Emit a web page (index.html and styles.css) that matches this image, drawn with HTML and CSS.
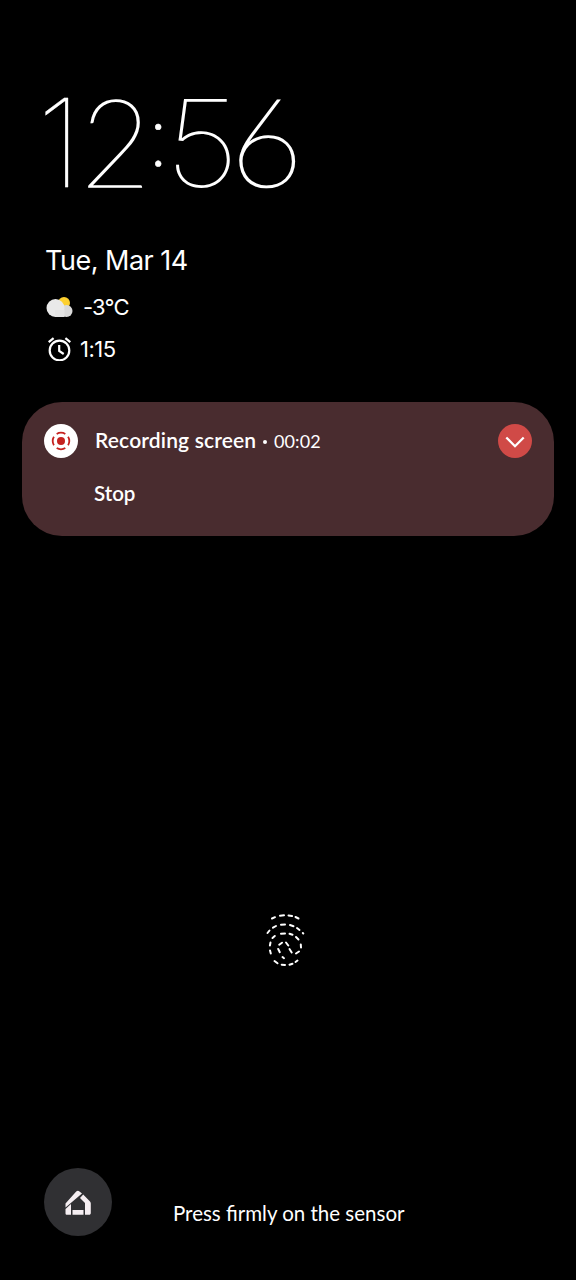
FILE: index.html
```html
<!DOCTYPE html>
<html lang="en">
<head>
<meta charset="utf-8">
<title>Lock screen</title>
<link rel="stylesheet" href="styles.css">
</head>
<body>
<main class="screen">
  <time class="clock"><span class="digit one">1</span><span class="digit two">2</span><span class="digit colon">:</span><span class="digit five">5</span><span class="digit six">6</span></time>
  <div class="date">Tue, Mar 14</div>
  <div class="status weather">
    <svg class="weather-icon" width="28" height="22" viewBox="0 0 28 22"><circle cx="18" cy="7" r="6" fill="#fdd02f"/><circle cx="20.500" cy="15" r="6" fill="#dadada"/><circle cx="9.500" cy="12" r="9" fill="#e9e9e9"/><path d="M9 14h9.500v7H9z" fill="#e4e4e4"/></svg>
    <span>-3°C</span>
  </div>
  <div class="status alarm">
    <svg class="alarm-icon" width="24" height="24" viewBox="0 0 24 24" fill="none" stroke="#fff" stroke-width="2.200"><circle cx="11.500" cy="13.500" r="9.800"/><path d="M11.200 8v6l4.500 3M.7 5.200 5.600 1.200M17.400 1.200l4.900 4"/></svg>
    <span>1:15</span>
  </div>
  <section class="card">
    <header class="card-head">
      <svg class="app-icon" width="34" height="34" viewBox="0 0 34 34"><circle cx="17" cy="17" r="17" fill="#fff"/><circle cx="17" cy="17" r="4" fill="#c5221f"/><circle cx="17" cy="17" r="8.300" fill="none" stroke="#c5221f" stroke-width="1.800" pathLength="80" stroke-dasharray="14 6" stroke-dashoffset="7"/></svg>
      <h1 class="title">Recording screen</h1><span class="dot"></span><span class="elapsed">00:02</span>
      <button class="expand" aria-label="Expand"><svg width="34" height="34" viewBox="0 0 34 34" fill="none" stroke="#fff" stroke-width="2.300"><path d="m8.300 13.500 8.700 8.700 8.700-8.700"/></svg></button>
    </header>
    <button class="stop">Stop</button>
  </section>
  <svg class="fingerprint" width="42" height="56" viewBox="264 912 42 56" fill="none" stroke="#fff" stroke-width="2" stroke-linecap="round">
    <path d="m272 918.500 3-1.300M280 915.700l4-.4M288.500 915.500l3.500.6M295.500 917l3 1.500"/>
    <path d="m267.500 933 2-2.500M273 927.700l3-1.700M281 924.700l4-.2M290 925l3.500 1.200M297 928l2.500 2M302.800 933l.5.500"/>
    <path d="m272.500 938 2.300-2M281 933.700l4-.2M289.500 933.800l3 1M296 937l2.500 2.500M300.800 944.500l.2 3M299 951.500l-3 2M291.700 952.500l-2.200-3.500M288.300 945.500l-2.300-3M282 942.700l-2.800 2M278.200 949l1.600 3.200M282.500 957l1.500 1.200M270.500 942.500l-.6 3M270 950.500l.8 3M274.500 961l3 2.300M281.700 964.700l3.300.3M289.500 964.700l3-1M295.500 962l2-1.500"/>
  </svg>
  <footer class="footer">
    <button class="home" aria-label="Home controls"><svg width="26" height="26" viewBox="0 0 26 26" fill="#f5eef2"><path d="m.5 14.500 10.700-12a2.500 2.500 0 0 1 3.300-.1l2.500 2L.5 18.500zM18.200 5.500 25 12.500c.6.600.8 1.300.8 2V24c0 1-.7 1.800-1.600 1.800H20V14l-5-5zM.5 20l5.500-5v10.800H2c-1 0-1.500-.7-1.500-1.600zM7.500 21h11v4.800h-11z"/></svg></button>
    <p class="hint">Press firmly on the sensor</p>
  </footer>
</main>
</body>
</html>
```
FILE: styles.css
```css
* { box-sizing: border-box; }
body { margin: 0; background: #000; color: #fff; font-family: Lato, "Liberation Sans", sans-serif; }
button { border: 0; padding: 0; background: none; color: inherit; font: inherit; }
.screen { display: flex; flex-direction: column; height: 1280px; padding: 70px 22px 0; }
.clock { display: flex; height: 145px; margin-left: 15px; font-size: 123px; font-weight: 100; line-height: 139px; }
.digit { display: block; white-space: nowrap; letter-spacing: -10px; transform-origin: left; -webkit-text-stroke: 1.7px #fff; }
.one { width: 44px; font-family: Inter, sans-serif; font-size: 122px; line-height: 146px; -webkit-text-stroke: 0.3px #fff; }
.two { width: 67px; transform: scaleX(0.97); }
.colon { width: 17px; font-size: 88px; line-height: 124px; letter-spacing: -5px; -webkit-text-stroke: 0.6px #fff; }
.five { width: 65px; font-family: Inter, sans-serif; font-size: 121px; line-height: 147px; letter-spacing: -14px; transform: scaleX(1.09); -webkit-text-stroke: 0; }
.six { transform: scaleX(1.02); }
.date { margin: 26px 0 0 23px; height: 40px; font-family: Inter, sans-serif; font-size: 27px; line-height: 40px; letter-spacing: -0.5px; }
.status { display: flex; align-items: center; height: 42px; margin-left: 24px; font-family: Inter, sans-serif; font-size: 22px; letter-spacing: -0.8px; }
.weather { margin-top: 5px; gap: 9px; }
.alarm { gap: 8px; padding-left: 2px; letter-spacing: -0.5px; }
.card { height: 134px; margin-top: 32px; padding: 22px; border-radius: 40px; background: #492c2f; }
.card-head { display: flex; align-items: center; height: 34px; }
.title { margin: -2px 0 0 17px; width: 161px; font-size: 21px; font-weight: 600; line-height: 30px; letter-spacing: 0.15px; white-space: nowrap; }
.dot { width: 4px; height: 4px; margin: 2px 7px 0 7px; border-radius: 50%; background: #fff; }
.elapsed { font-size: 18px; letter-spacing: 0.1px; }
.expand { width: 34px; height: 34px; margin-left: auto; border-radius: 50%; background: #d04a47; }
.expand svg { display: block; }
.stop { display: block; margin: 20px 0 0 50px; font-size: 20.5px; font-weight: 600; line-height: 30px; }
.fingerprint { display: block; margin: 376px 0 0 242px; }
.footer { display: flex; margin: 200px 0 0 22px; }
.home { display: grid; place-items: center; width: 68px; height: 68px; border-radius: 50%; background: #303033; }
.hint { margin: 30px 0 0 61px; font-size: 20.5px; line-height: 30px; white-space: nowrap; }
```
